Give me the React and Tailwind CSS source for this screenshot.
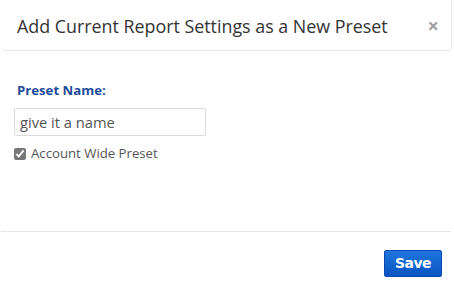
export default function App() {
  return (
    <div className="w-[454px] h-[296px] bg-white relative font-['Open_Sans',sans-serif] overflow-hidden">
      <div className="h-[51px] ml-px mr-[2px] flex items-center justify-between pl-4 pr-[12px] border-b border-r border-[#e8e8e8] rounded-b-[4px]">
        <h2 className="text-[17.85px] text-[#333] leading-none mt-[3px]">Add Current Report Settings as a New Preset</h2>
        <button type="button" className="text-[#a0a0a0] text-[20px] font-bold leading-none mt-[2px]">×</button>
      </div>

      <div className="h-[180px] pl-[14px] pt-[33px]">
        <label className="block pl-[3px] text-[13.2px] font-bold text-[#1e4b99] leading-none">Preset Name:</label>
        <input
          type="text"
          defaultValue="give it a name"
          className="mt-[11px] w-[192px] h-[28px] pl-[5px] pr-[3px] border border-[#dcdcdc] rounded-[2px] text-[14.7px] text-[#555] focus:outline-none"
        />
        <label className="mt-[8px] flex items-center gap-[5px] text-[13.2px] text-[#555]">
          <input type="checkbox" defaultChecked className="w-[12px] h-[12px] m-0 accent-[#777]" />
          Account Wide Preset
        </label>
      </div>

      <div className="ml-px mr-[3px] border-t border-[#e5e5e5] flex justify-end pt-[18px] pr-[9px]">
        <button
          type="button"
          className="w-[58px] h-[27px] rounded-[2px] border border-[#0a49b3] bg-gradient-to-b from-[#1e75dd] to-[#0b55c2] text-white text-[14px] font-bold font-['DejaVu_Sans',sans-serif] tracking-[-0.5px]"
        >
          Save
        </button>
      </div>
    </div>
  );
}
